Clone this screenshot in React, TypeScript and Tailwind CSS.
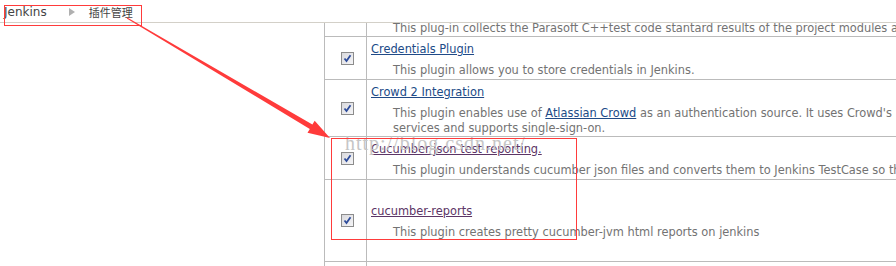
import React from "react";

const font = { fontFamily: '"DejaVu Sans", Verdana, sans-serif' };

function Check() {
  return (
    <svg width="13" height="13" viewBox="0 0 13 13">
      <defs>
        <linearGradient id="cbg" x1="0" y1="0" x2="1" y2="1">
          <stop offset="0" stopColor="#d8d8dc" />
          <stop offset="1" stopColor="#f6f6f8" />
        </linearGradient>
      </defs>
      <rect x="0.5" y="0.5" width="12" height="12" fill="url(#cbg)" stroke="#8c8c8c" />
      <path d="M3.5 6.5 L5.5 9 L9.5 3.2" fill="none" stroke="#2d4b9a" strokeWidth="1.8" />
    </svg>
  );
}

function Row({
  h,
  children,
  pt = "pt-[5px]",
}: {
  h: string;
  children: React.ReactNode;
  pt?: string;
}) {
  return (
    <div className={`flex border-b border-[#bbbbbb] ${h}`}>
      <div className="w-[42px] shrink-0 border-r border-[#bbbbbb] flex items-center justify-center pl-[4px]">
        <Check />
      </div>
      <div className={`flex-1 pl-[4px] ${pt} whitespace-nowrap`}>{children}</div>
    </div>
  );
}

function Desc({ children }: { children: React.ReactNode }) {
  return <div className="mt-[7px] ml-[22px] leading-[15px] text-[#737373]">{children}</div>;
}

function Title({ children, visited }: { children: React.ReactNode; visited?: boolean }) {
  return (
    <div className="leading-[14px]">
      <span className={`underline ${visited ? "text-[#5c3566]" : "text-[#204a87]"}`}>{children}</span>
    </div>
  );
}

export default function App() {
  return (
    <div className="relative w-[896px] h-[266px] overflow-hidden bg-white text-[11.4px]" style={font}>
      {/* breadcrumb */}
      <div className="h-[23px] border-b border-[#d3d0c8] flex items-center pl-[4px] pt-[2px] text-[12px] text-[#444]">
        <span>Jenkins</span>
        <svg width="6" height="8" viewBox="0 0 6 8" className="ml-[22px] mr-[14px]">
          <path d="M0 0 L6 4 L0 8 Z" fill="#b0b0b0" />
        </svg>
        <span style={{ fontFamily: '"Noto Sans CJK SC", sans-serif' }} className="text-[11px]">插件管理</span>
      </div>

      {/* table */}
      <div className="flex">
        <div className="w-[324px] shrink-0" />
        <div className="flex-1 border-l border-[#bbbbbb]">
          <div className="flex border-b border-[#bbbbbb] h-[14px] overflow-hidden">
            <div className="w-[42px] shrink-0 border-r border-[#bbbbbb]" />
            <div className="flex-1 pl-[26px] -mt-[2px] leading-[15px] text-[#737373] whitespace-nowrap">
              This plug-in collects the Parasoft C++test code stantard results of the project modules and
            </div>
          </div>
          <Row h="h-[43px]">
            <Title>Credentials Plugin</Title>
            <Desc>This plugin allows you to store credentials in Jenkins.</Desc>
          </Row>
          <Row h="h-[57px]">
            <Title>Crowd 2 Integration</Title>
            <Desc>
              This plugin enables use of{" "}
              <span className="underline text-[#204a87]">Atlassian Crowd</span> as an authentication source. It uses
              Crowd's
              <br />
              services and supports single-sign-on.
            </Desc>
          </Row>
          <Row h="h-[43px]">
            <Title visited>Cucumber json test reporting.</Title>
            <Desc>This plugin understands cucumber json files and converts them to Jenkins TestCase so that</Desc>
          </Row>
          <Row h="h-[82px]" pt="pt-[24px]">
            <Title visited>cucumber-reports</Title>
            <Desc>This plugin creates pretty cucumber-jvm html reports on jenkins</Desc>
          </Row>
          <div className="flex h-[10px]">
            <div className="w-[42px] shrink-0 border-r border-[#bbbbbb]" />
          </div>
        </div>
      </div>

      {/* watermark */}
      <div
        className="absolute left-[345px] top-[131px] leading-[24px] text-[20px] tracking-[1px] text-[#c6c6c6] pointer-events-none"
        style={{ fontFamily: '"Liberation Serif", serif' }}
      >
        http://blog.csdn.net/
      </div>

      {/* annotations */}
      <div className="absolute left-[4px] top-[5px] w-[138px] h-[21px] border border-[#ff3b3b]" />
      <div className="absolute left-[331px] top-[138px] w-[246px] h-[102px] border border-[#ff3b3b]" />
      <svg className="absolute left-0 top-0" width="896" height="266">
        <polygon
          points="127.25,17.57 312.4,124.6 314.7,120.8 330,138 307.5,132.8 309.8,129.0 126.75,18.43"
          fill="#ff3b3b"
        />
      </svg>
    </div>
  );
}
